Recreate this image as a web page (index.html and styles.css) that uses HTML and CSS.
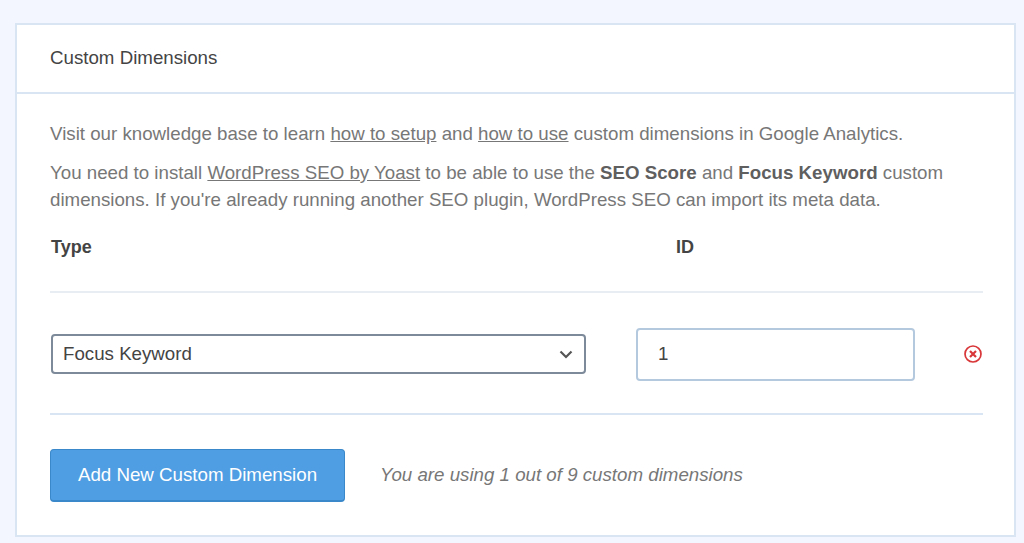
FILE: index.html
```html
<!DOCTYPE html>
<html lang="en">
<head>
<meta charset="utf-8">
<title>Custom Dimensions</title>
<link rel="stylesheet" href="styles.css">
</head>
<body>
<section class="card">
  <header class="card-head">Custom Dimensions</header>
  <div class="card-body">
    <p class="intro">Visit our knowledge base to learn <a href="#">how to setup</a> and <a href="#">how to use</a> custom dimensions in Google Analytics.</p>
    <p class="notice">You need to install <a href="#">WordPress SEO by Yoast</a> to be able to use the <b>SEO Score</b> and <b>Focus Keyword</b> custom dimensions. If you're already running another SEO plugin, WordPress SEO can import its meta data.</p>
    <div class="table-head">
      <div class="col-type">Type</div>
      <div class="col-id">ID</div>
    </div>
    <div class="row">
      <div class="select">
        <span>Focus Keyword</span>
        <svg class="chev" width="14" height="9" viewBox="0 0 14 9"><path d="M1.500 1.500 7 7l5.500-5.500" fill="none" stroke="#555" stroke-width="2.200"/></svg>
      </div>
      <div class="input">1</div>
      <svg class="remove" width="18" height="18" viewBox="0 0 18 18"><circle cx="9" cy="9" r="8" fill="none" stroke="#d83638" stroke-width="1.700"/><path d="M6 6l6 6M12 6l-6 6" stroke="#d83638" stroke-width="2.200" fill="none"/></svg>
    </div>
    <div class="actions">
      <button class="add" type="button">Add New Custom Dimension</button>
      <em class="usage">You are using 1 out of 9 custom dimensions</em>
    </div>
  </div>
</section>
</body>
</html>
```
FILE: styles.css
```css
html, body { margin: 0; padding: 0; }
body {
  height: 543px;
  overflow: hidden;
  background: #f3f6ff;
  font-family: "Liberation Sans", Arial, sans-serif;
  font-size: 18.72px;
  color: #777;
  padding: 23px 8px 0 15px;
  box-sizing: border-box;
}
.card {
  background: #fff;
  border: 2px solid #d9e5f2;
  height: 514px;
  box-sizing: border-box;
}
.card-head {
  height: 69px;
  box-sizing: border-box;
  padding: 0 33px 2px;
  display: flex;
  align-items: center;
  color: #444;
  border-bottom: 2px solid #d9e5f2;
}
.card-body { padding: 26px 31px 0 33px; }
p { margin: 0; line-height: 27px; }
.notice { margin-top: 12px; }
a { color: #777; text-decoration: underline; }
b { color: #5f5f5f; }
.table-head {
  display: flex;
  font-size: 18px;
  font-weight: 700;
  color: #444;
  padding-top: 21px;
  height: 80px;
  box-sizing: border-box;
  line-height: 27px;
  border-bottom: 2px solid #e7edf3;
}
.col-type { width: 626px; padding-left: 1px; box-sizing: border-box; }
.row {
  display: flex;
  align-items: center;
  height: 122px;
  padding-top: 2px;
  box-sizing: border-box;
  border-bottom: 2px solid #d9e5f2;
}
.select {
  width: 535px;
  height: 40px;
  margin-left: 1px;
  box-sizing: border-box;
  border: 2px solid #7d8a99;
  border-radius: 4px;
  display: flex;
  align-items: center;
  justify-content: space-between;
  padding: 0 11px 0 10px;
  color: #444;
}
.input {
  width: 279px;
  height: 53px;
  margin-left: 50px;
  box-sizing: border-box;
  border: 2px solid #b4c9de;
  border-radius: 4px;
  display: flex;
  align-items: center;
  padding-left: 20px;
  color: #444;
}
.remove { margin-left: 49px; }
.actions {
  display: flex;
  align-items: center;
  margin-top: 34px;
}
.add {
  width: 295px;
  height: 53px;
  background: #4f9ee3;
  border: 1px solid #3a87c9;
  border-bottom-width: 2px;
  border-radius: 4px;
  color: #fff;
  font: inherit;
  padding: 0;
}
.usage { margin-left: 35px; margin-bottom: 2px; color: #777; }
```
